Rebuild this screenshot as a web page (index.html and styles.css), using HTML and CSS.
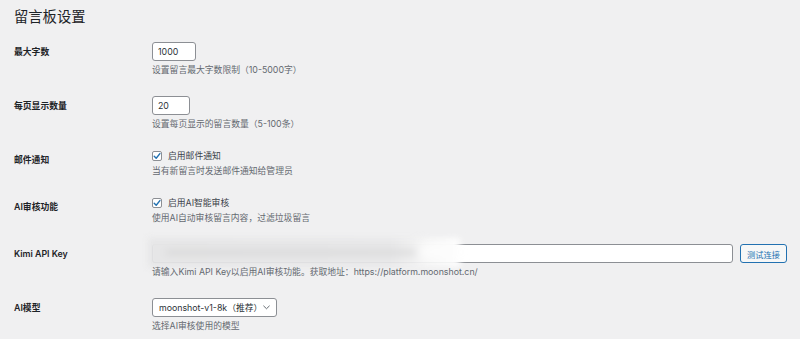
FILE: index.html
```html
<!DOCTYPE html>
<html lang="zh-CN">
<head>
<meta charset="utf-8">
<title>留言板设置</title>
<link rel="stylesheet" href="styles.css">
</head>
<body>
<div class="wrap">
  <h1 class="title">留言板设置</h1>
  <div class="form">
    <div class="row">
      <div class="label">最大字数</div>
      <div class="field">
        <input class="input w-max" type="text" value="1000">
        <p class="desc">设置留言最大字数限制（10-5000字）</p>
      </div>
    </div>
    <div class="row">
      <div class="label">每页显示数量</div>
      <div class="field">
        <input class="input w-page" type="text" value="20">
        <p class="desc">设置每页显示的留言数量（5-100条）</p>
      </div>
    </div>
    <div class="row">
      <div class="label">邮件通知</div>
      <div class="field">
        <div class="check-line">
          <span class="checkbox"><svg viewBox="0 0 10 10" width="10" height="10"><path d="M2.2 5.2 L4.2 7.2 L7.9 2.6" fill="none" stroke="#2271b1" stroke-width="1.4" stroke-linecap="round" stroke-linejoin="round"/></svg></span>
          <span>启用邮件通知</span>
        </div>
        <p class="desc">当有新留言时发送邮件通知给管理员</p>
      </div>
    </div>
    <div class="row">
      <div class="label">AI审核功能</div>
      <div class="field">
        <div class="check-line">
          <span class="checkbox"><svg viewBox="0 0 10 10" width="10" height="10"><path d="M2.2 5.2 L4.2 7.2 L7.9 2.6" fill="none" stroke="#2271b1" stroke-width="1.4" stroke-linecap="round" stroke-linejoin="round"/></svg></span>
          <span>启用AI智能审核</span>
        </div>
        <p class="desc">使用AI自动审核留言内容，过滤垃圾留言</p>
      </div>
    </div>
    <div class="row">
      <div class="label">Kimi API Key</div>
      <div class="field">
        <div class="key-line">
          <div class="key-wrap">
            <input class="input w-key" type="text" value="">
            <div class="blur"><div class="blur-line"></div><div class="blur-glow"></div></div>
          </div>
          <button class="btn" type="button">测试连接</button>
        </div>
        <p class="desc desc-key">请输入Kimi API Key以启用AI审核功能。获取地址：https://platform.moonshot.cn/</p>
      </div>
    </div>
    <div class="row">
      <div class="label">AI模型</div>
      <div class="field">
        <div class="select">
          <span>moonshot-v1-8k（推荐）</span>
          <svg class="chev" viewBox="0 0 8 5" width="7" height="5"><path d="M0.8 0.8 L4 3.9 L7.2 0.8" fill="none" stroke="#50575e" stroke-width="1" stroke-linecap="round" stroke-linejoin="round"/></svg>
        </div>
        <p class="desc">选择AI审核使用的模型</p>
      </div>
    </div>
  </div>
</div>
</body>
</html>
```
FILE: styles.css
```css
* { box-sizing: border-box; }

body {
  margin: 0;
  background: #f0f0f1;
  font-family: Inter, "Noto Sans CJK SC", sans-serif;
  font-size: 8.8px;
  color: #1d2327;
}

.wrap {
  padding: 0 14px;
}

.title {
  margin: 0;
  padding-top: 8px;
  font-size: 14.3px;
  font-weight: 400;
  line-height: 18px;
  color: #1d2327;
}

.form {
  margin-top: 6px;
}

.row {
  display: grid;
  grid-template-columns: 138px 1fr;
  padding: 10px 0;
}

.label {
  font-weight: 600;
  line-height: 12px;
  padding-top: 3.5px;
}

.field {
  display: flex;
  flex-direction: column;
  align-items: flex-start;
}

.input {
  height: 19px;
  margin: 0;
  border: 1px solid #8c8f94;
  border-radius: 3px;
  background: #fff;
  padding: 0 5px;
  font: inherit;
  color: #2c3338;
  outline: none;
}

.w-max { width: 44px; }
.w-page { width: 38px; }
.w-key { width: 581px; display: block; }

.desc {
  margin: 3px 0 0;
  line-height: 12px;
  color: #646970;
}

.desc-key {
  position: relative;
}

.check-line {
  display: flex;
  align-items: center;
  gap: 6px;
  height: 12px;
  line-height: 12px;
  color: #3c434a;
}

.checkbox {
  width: 10px;
  height: 10px;
  border: 1px solid #8c8f94;
  border-radius: 2px;
  background: #fff;
  display: flex;
  align-items: center;
  justify-content: center;
  overflow: hidden;
}

.checkbox svg {
  flex: none;
}

.key-line {
  display: flex;
  gap: 7px;
  align-self: stretch;
}

.key-wrap {
  position: relative;
}

.blur {
  position: absolute;
  left: -4px;
  top: -6px;
  width: 312px;
  height: 29px;
  background: linear-gradient(to right, #e6e6e7 0%, #e8e8e9 78%, #f3f3f3 88%, #fbfbfb 96%, #ffffff 100%);
  filter: blur(3px);
}

.blur-line {
  position: absolute;
  left: 18px;
  top: 13px;
  width: 250px;
  height: 3px;
  background: #cfcfd0;
  filter: blur(2px);
}

.blur-glow {
  position: absolute;
  right: 4px;
  top: 5px;
  width: 36px;
  height: 18px;
  background: #fcfcfc;
  filter: blur(4px);
}

.btn {
  width: 47px;
  height: 19px;
  margin: 0;
  padding: 0;
  border: 1px solid #2271b1;
  border-radius: 3px;
  background: #f6f7f7;
  color: #2271b1;
  font: inherit;
  font-size: 8.2px;
}

.select {
  width: 125px;
  height: 19px;
  border: 1px solid #8c8f94;
  border-radius: 3px;
  background: #fff;
  padding: 0 6px;
  display: flex;
  align-items: center;
  justify-content: space-between;
  color: #2c3338;
  line-height: 12px;
}

.chev {
  flex: none;
}
```
